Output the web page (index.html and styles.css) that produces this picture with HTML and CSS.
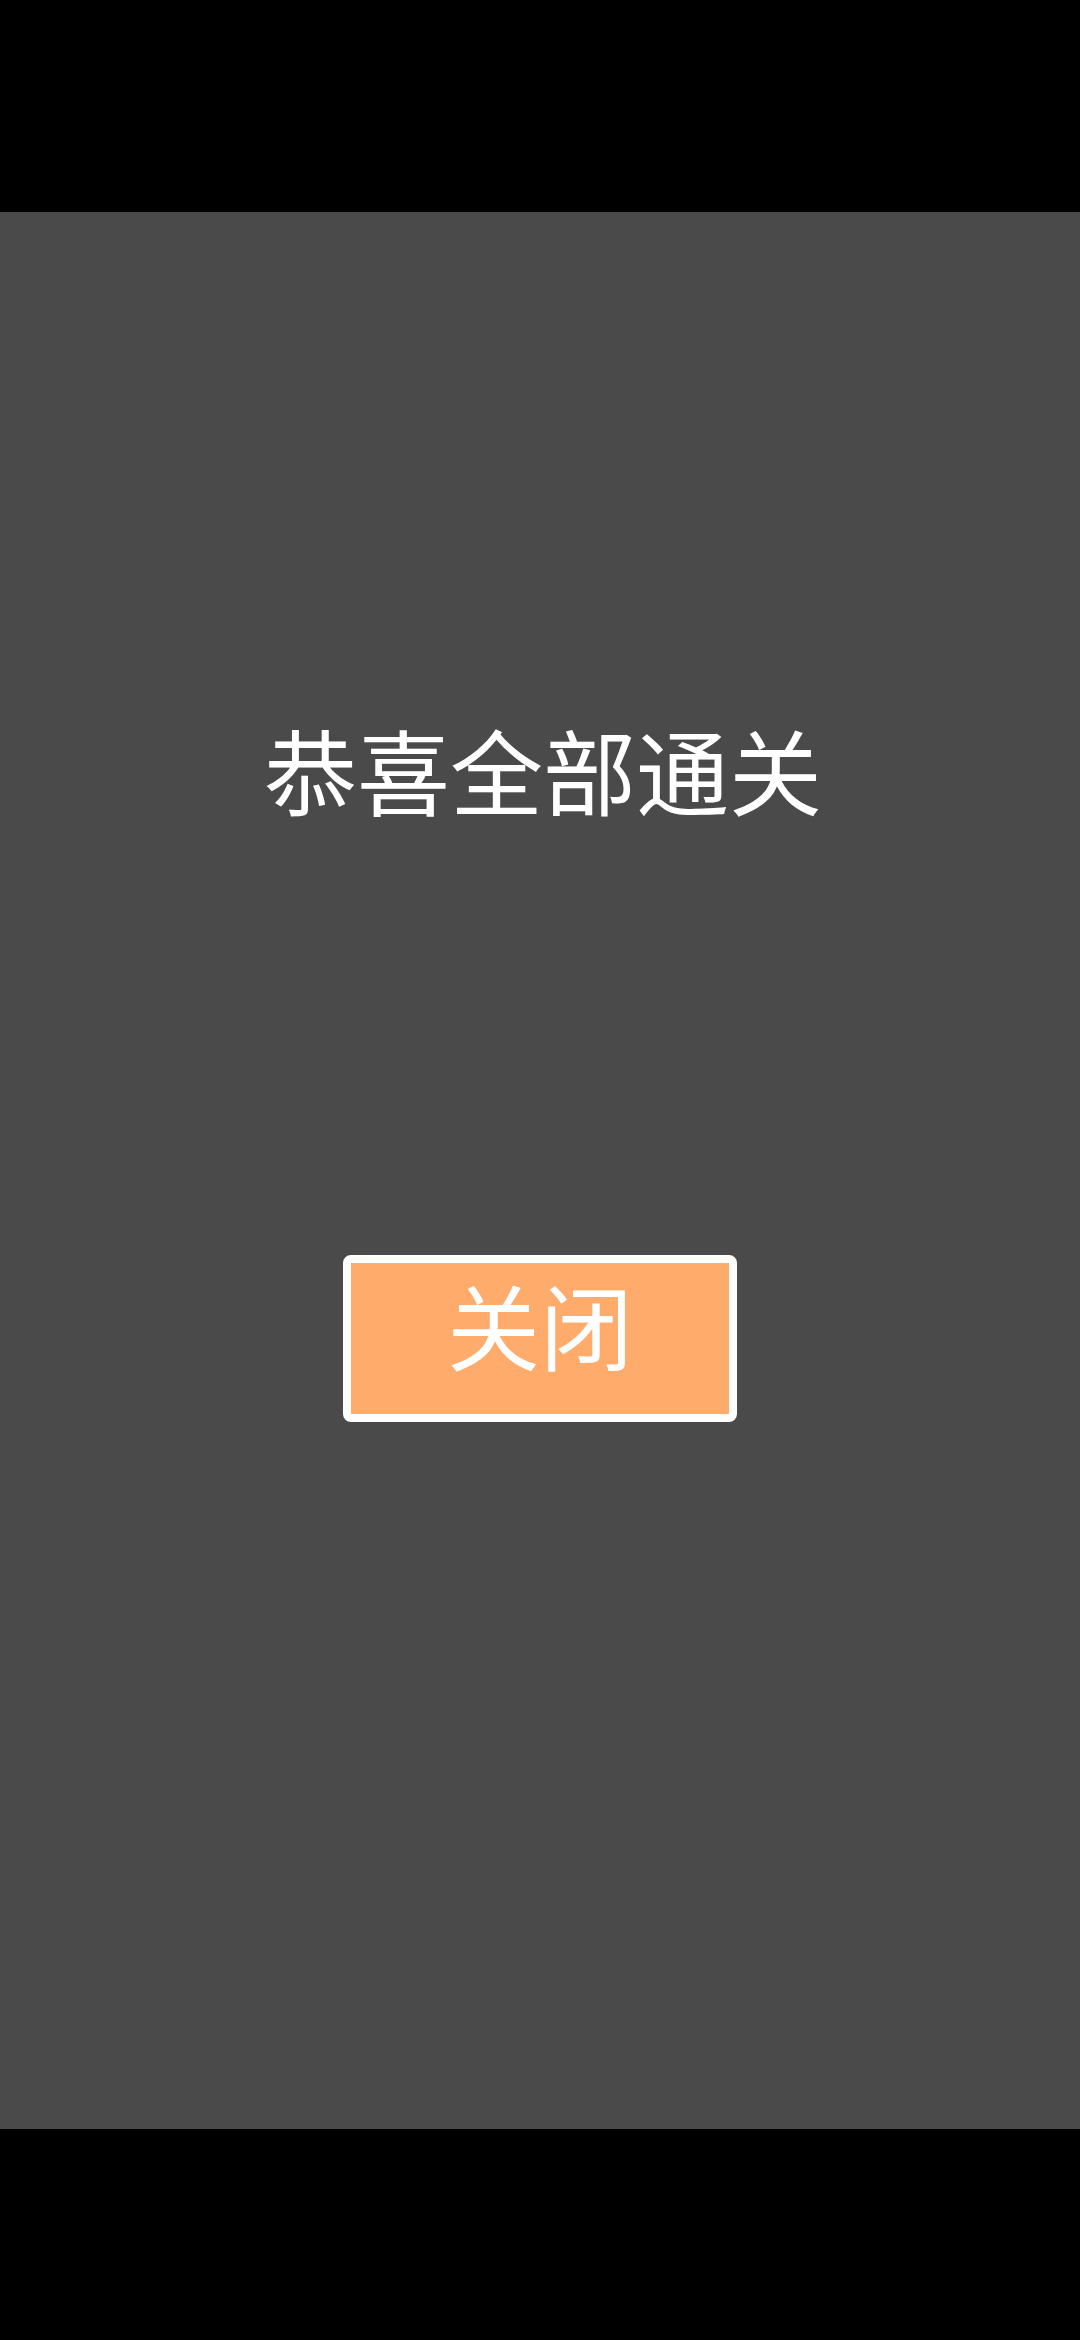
FILE: index.html
```html
<!DOCTYPE html>
<html lang="zh-CN">
<head>
<meta charset="utf-8">
<title>恭喜全部通关</title>
<link rel="stylesheet" href="styles.css">
</head>
<body>
<div class="screen">
  <div class="status-bar"></div>
  <main class="dialog">
    <h1 class="title">恭喜全部通关</h1>
    <button class="close-btn" type="button">关闭</button>
  </main>
  <div class="nav-bar"></div>
</div>
</body>
</html>
```

FILE: styles.css
```css
html, body {
  margin: 0;
  padding: 0;
  background: #000;
}
.screen {
  width: 1080px;
  height: 2340px;
  display: flex;
  flex-direction: column;
  font-family: "Noto Sans CJK SC", "Noto Sans", sans-serif;
}
.status-bar {
  height: 212px;
  background: #000;
  flex: none;
}
.dialog {
  height: 1917px;
  flex: none;
  background: #4a4a4a;
  display: flex;
  flex-direction: column;
  align-items: center;
  box-sizing: border-box;
  padding-top: 510px;
}
.title {
  margin: 0 0 0 6px;
  font-size: 93px;
  line-height: 93px;
  font-weight: 400;
  color: #fff;
  white-space: nowrap;
}
.close-btn {
  margin-top: 440px;
  width: 394px;
  height: 167px;
  box-sizing: border-box;
  border: 8px solid #fff;
  border-radius: 8px;
  background: #ffab6b;
  color: #fff;
  font-family: inherit;
  font-size: 93px;
  line-height: 93px;
  font-weight: 400;
  padding: 14px 0 44px;
  display: flex;
  justify-content: center;
  align-items: flex-start;
}
.nav-bar {
  flex: 1;
  background: #000;
}
```
